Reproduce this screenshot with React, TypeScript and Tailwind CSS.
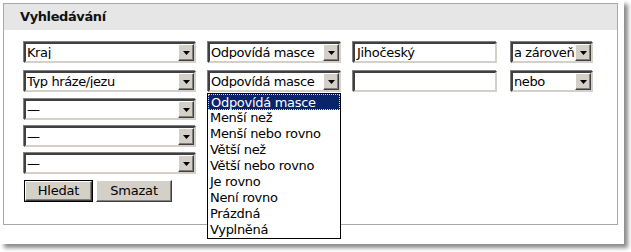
import React from "react";

const font = { fontFamily: '"DejaVu Sans", Verdana, sans-serif' };

function Arrow() {
  return (
    <div className="flex h-[17px] w-[16px] shrink-0 items-center justify-center border border-t-white border-l-white border-r-[#404040] border-b-[#404040] bg-[#d4d0c8] shadow-[inset_-1px_-1px_0_#808080]">
      <svg width="7" height="4" viewBox="0 0 7 4">
        <path d="M0 0h7L3.5 4z" fill="#000" />
      </svg>
    </div>
  );
}

function Select({ w, value }: { w: string; value: string }) {
  return (
    <div
      className={`${w} flex h-[21px] items-center border-2 border-t-[#404040] border-l-[#404040] border-r-[#d4d0c8] border-b-[#d4d0c8] bg-white shadow-[1px_1px_0_#fff,-1px_-1px_0_#808080]`}
    >
      <span className="flex-1 overflow-hidden whitespace-nowrap pl-[1px] text-[13px] leading-none tracking-[-0.4px] text-black">
        {value}
      </span>
      <Arrow />
    </div>
  );
}

function Input({ value }: { value: string }) {
  return (
    <div className="flex h-[21px] w-[144px] items-center border-2 border-t-[#404040] border-l-[#404040] border-r-[#d4d0c8] border-b-[#d4d0c8] bg-white shadow-[1px_1px_0_#fff,-1px_-1px_0_#808080]">
      <span className="pl-[2px] text-[13px] leading-none tracking-[-0.3px] text-black">{value}</span>
    </div>
  );
}

function Button({ label, w, primary }: { label: string; w: string; primary?: boolean }) {
  return (
    <div className={`${w} h-[22px] ${primary ? "border border-black" : ""}`}>
      <div className="flex h-full w-full items-center justify-center border border-t-white border-l-white border-r-[#404040] border-b-[#404040] bg-[#d4d0c8] text-[13px] tracking-[-0.2px] text-black shadow-[inset_-1px_-1px_0_#808080]">
        {label}
      </div>
    </div>
  );
}

const options = [
  "Odpovídá masce",
  "Menší než",
  "Menší nebo rovno",
  "Větší než",
  "Větší nebo rovno",
  "Je rovno",
  "Není rovno",
  "Prázdná",
  "Vyplněná",
];

export default function App() {
  return (
    <div className="relative h-[252px] w-[631px] bg-white" style={font}>
      <div className="h-[244px] w-[624px] bg-white pl-[3px] pt-[3px] shadow-[4px_4px_4px_rgba(0,0,0,0.45)]">
        <div className="h-[222px] w-[615px] border border-[#a8a8a8] bg-white">
          <div className="flex h-[26px] items-center bg-[#e6e6e6] pl-[16px] text-[13px] font-bold tracking-[-0.4px] text-[#111]">
            Vyhledávání
          </div>
          <div className="flex flex-col pl-[20px] pt-[12px]">
            <div className="flex items-center">
              <Select w="w-[172px]" value="Kraj" />
              <div className="ml-[12px]">
                <Select w="w-[133px]" value="Odpovídá masce" />
              </div>
              <div className="ml-[12px]">
                <Input value="Jihočeský" />
              </div>
              <div className="ml-[14px]">
                <Select w="w-[82px]" value="a zároveň" />
              </div>
            </div>
            <div className="mt-[8px] flex items-center">
              <Select w="w-[172px]" value="Typ hráze/jezu" />
              <div className="ml-[12px]">
                <Select w="w-[133px]" value="Odpovídá masce" />
              </div>
              <div className="ml-[12px]">
                <Input value="" />
              </div>
              <div className="ml-[14px]">
                <Select w="w-[82px]" value="nebo" />
              </div>
            </div>
            <div className="mt-[7px]">
              <Select w="w-[172px]" value="—" />
            </div>
            <div className="mt-[6px]">
              <Select w="w-[172px]" value="—" />
            </div>
            <div className="mt-[6px]">
              <Select w="w-[172px]" value="—" />
            </div>
            <div className="mt-[6px] flex gap-[3px]">
              <Button label="Hledat" w="w-[69px]" primary />
              <Button label="Smazat" w="w-[76px]" />
            </div>
          </div>
        </div>
      </div>

      <div className="absolute left-[207px] top-[93px] w-[134px] border border-black bg-white">
        {options.map((o, i) => (
          <div
            key={o}
            className={`h-[16px] whitespace-nowrap pl-[2px] text-[13px] leading-[16px] tracking-[-0.3px] ${
              i === 0
                ? "border border-dotted border-[#ffd866] bg-[#0a246a] pl-[1px] leading-[14px] text-white"
                : "text-black"
            }`}
          >
            {o}
          </div>
        ))}
      </div>
    </div>
  );
}
